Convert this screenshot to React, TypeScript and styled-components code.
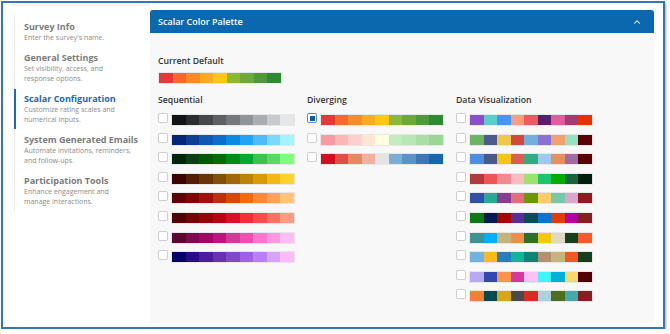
import styled, { createGlobalStyle } from 'styled-components';
import { ChevronUp } from 'lucide-react';

const GlobalStyle = createGlobalStyle`
  html, body {
    margin: 0;
    padding: 0;
    background: #ffffff;
  }
  body {
    font-family: 'Open Sans', 'DejaVu Sans', sans-serif;
  }
`;

const Frame = styled.div`
  box-sizing: border-box;
  width: 664px;
  height: 328px;
  margin: 1px 0 0 1px;
  border: 2px solid #3577b6;
  box-shadow: 1px 2px 2px rgba(0, 0, 0, 0.35);
  background: #ffffff;
  display: flex;
  padding: 0 9px 4px 11px;
`;

const Sidebar = styled.aside`
  width: 136px;
  flex-shrink: 0;
  display: flex;
  flex-direction: column;
`;

const TopStrip = styled.div`
  height: 3px;
  margin-left: -2px;
  background: #f3f3f3;
`;

const Nav = styled.ul`
  margin: 9px 0 0;
  padding: 2px 0 0;
  list-style: none;
  border-left: 1px solid #ebebeb;
  display: flex;
  flex-direction: column;
  gap: 1px;
`;

const NavItem = styled.li<{ $active?: boolean }>`
  margin-left: -1px;
  padding: 4px 0 4px 8px;
  border-left: 2px solid ${(p) => (p.$active ? '#1b6ab3' : 'transparent')};
`;

const NavTitle = styled.div<{ $active?: boolean }>`
  font-size: 9px;
  line-height: 12px;
  font-weight: 700;
  color: ${(p) => (p.$active ? '#1b6ab3' : '#7b7b7b')};
  white-space: nowrap;
`;

const NavDesc = styled.div`
  font-size: 7px;
  line-height: 10px;
  color: #8c8c8c;
  white-space: pre-line;
`;

const Main = styled.section`
  flex: 1;
  margin-top: 7px;
  display: flex;
  flex-direction: column;
`;

const Header = styled.div`
  height: 23px;
  background: #0b67ae;
  border-radius: 3px 3px 0 0;
  display: flex;
  align-items: center;
  justify-content: space-between;
  padding: 0 12px 0 8px;
  color: #ffffff;
`;

const HeaderTitle = styled.span`
  font-size: 9px;
  font-weight: 600;
`;

const Body = styled.div`
  flex: 1;
  background: #f8f8f8;
  padding: 22px 8px 0;
`;

const Label = styled.div`
  font-size: 8.7px;
  line-height: 12px;
  font-weight: 600;
  color: #333333;
`;

const Palette = styled.div`
  display: flex;
  height: 12px;
  box-sizing: border-box;
  border: 1px solid #e6e6e6;
  flex-shrink: 0;
`;

const Swatch = styled.div<{ $color: string }>`
  width: 13.5px;
  height: 100%;
  background: ${(p) => p.$color};
`;

const DefaultPalette = styled(Palette)`
  margin-top: 5px;
  width: fit-content;
`;

const Columns = styled.div`
  display: grid;
  grid-template-columns: 149px 149px 149px;
  margin-top: 10px;
`;

const Column = styled.div`
  display: flex;
  flex-direction: column;
`;

const Rows = styled.div`
  display: flex;
  flex-direction: column;
  gap: 6.6px;
  margin-top: 7px;
`;

const Row = styled.div`
  display: flex;
  align-items: flex-start;
  gap: 3px;
  & > ${Palette} {
    margin-top: 1px;
  }
`;

const Checkbox = styled.span<{ $checked?: boolean }>`
  box-sizing: border-box;
  width: 10px;
  height: 10px;
  border-radius: 2px;
  background: #ffffff;
  border: 1px solid ${(p) => (p.$checked ? '#5b8fc9' : '#cfcfcf')};
  box-shadow: 0 0 1px rgba(0, 0, 0, 0.08);
  padding: 1.5px;
  flex-shrink: 0;
  &::after {
    content: '';
    display: ${(p) => (p.$checked ? 'block' : 'none')};
    width: 100%;
    height: 100%;
    background: #0b5fab;
  }
`;

const defaultColors = ['#e53935', '#f4692e', '#f68b2c', '#fbab22', '#fdc80f', '#8bb83a', '#6fa83a', '#4e9a3a', '#2e8b33'];

const sequential = [
  ['#111417', '#2b2d30', '#45474b', '#5d6064', '#76797d', '#909397', '#aaadb1', '#c8cacd', '#e4e6e9'],
  ['#06267a', '#0d3f94', '#0c58b3', '#0a6fcc', '#0a8be3', '#1ea5f8', '#4cbcfc', '#7bd8ff', '#a2f4ff'],
  ['#04260d', '#0e3f14', '#005a00', '#006f00', '#008e12', '#05aa2d', '#3ec248', '#5ed95f', '#7dff7a'],
  ['#3e0303', '#561f02', '#6b3503', '#844f08', '#a06808', '#bb8409', '#d89c06', '#f4b71a', '#ffd12c'],
  ['#5c0202', '#7d0505', '#9e120a', '#b9320a', '#d44a05', '#ef6b12', '#fc8a3a', '#fda35c', '#ffc47a'],
  ['#520000', '#780307', '#9a0307', '#bb0312', '#d4102a', '#ee2f34', '#fa4a4a', '#fe7066', '#ff9a82'],
  ['#5e0533', '#7c0a4f', '#9c0a63', '#bc1480', '#cb3d98', '#eb4fb1', '#f878cc', '#fd98e3', '#ffbcf5'],
  ['#06036a', '#2b0a8b', '#4b1ca3', '#6630b7', '#7f48cd', '#9f61e5', '#bd7ef2', '#d7a3f8', '#fbbcf9'],
];

const diverging = [
  defaultColors,
  ['#f99ba1', '#fbb6b8', '#fdd0cf', '#fde6d4', '#fffee0', '#c4ebc1', '#b9e6b5', '#a9dfa4', '#9bd794'],
  ['#d1101e', '#dd5048', '#e98665', '#f0b29e', '#e4e4e4', '#7badd9', '#5c92cb', '#3a78b9', '#1667b0'],
];

const dataViz = [
  ['#8a4fc8', '#5dcdca', '#4694ff', '#ff9c80', '#eb5a5f', '#5c1d6f', '#e25da0', '#a63a73', '#e63200'],
  ['#6cb463', '#4c5a8e', '#edc84a', '#d2483c', '#70b0de', '#8a6fd4', '#f1a36f', '#9cdfc0', '#5a0000'],
  ['#4a8fe0', '#4a5a8d', '#f3c618', '#e25b52', '#2fae84', '#9ecaf0', '#e98f5d', '#a16aa5', '#5c0000'],
  ['#b13a3a', '#ef5556', '#f08a90', '#fbbcc1', '#9be36d', '#1dc46b', '#00ad00', '#186440', '#00200c'],
  ['#3150a6', '#2fa592', '#873d90', '#e36b7a', '#6a960a', '#fdcb6b', '#76c9a8', '#dba7cf', '#8b1c1f'],
  ['#0b7a16', '#001b52', '#aa0000', '#5a2e93', '#084c55', '#0275d4', '#e53a00', '#b400a5', '#8b1c1f'],
  ['#3f9192', '#00aefc', '#c5b47a', '#f08e4a', '#2e6e2e', '#f2c813', '#ddd9c4', '#1a3e1b', '#f25c2a'],
  ['#72b2e0', '#fbb91e', '#2a7cbf', '#10b496', '#0f8573', '#b48f70', '#c6b37d', '#f35629', '#183f1c'],
  ['#b8a9f5', '#3248b0', '#ff944a', '#d3399a', '#ffc0f5', '#3ef6fa', '#00b0d8', '#ffd56d', '#530000'],
  ['#f57f34', '#014a4d', '#d5a716', '#4a4a4e', '#dd2a23', '#abd2dd', '#4e6d1d', '#44aaaa', '#8b1c1f'],
];

const navItems = [
  { title: 'Survey Info', desc: "Enter the survey's name." },
  { title: 'General Settings', desc: 'Set visibility, access, and\nresponse options.' },
  { title: 'Scalar Configuration', desc: 'Customize rating scales and\nnumerical inputs.', active: true },
  { title: 'System Generated Emails', desc: 'Automate invitations, reminders,\nand follow-ups.' },
  { title: 'Participation Tools', desc: 'Enhance engagement and\nmanage interactions.' },
];

function Swatches({ colors }: { colors: string[] }) {
  return (
    <>
      {colors.map((c, i) => (
        <Swatch key={i} $color={c} />
      ))}
    </>
  );
}

function PaletteGroup({ title, palettes, checked }: { title: string; palettes: string[][]; checked?: number }) {
  return (
    <Column>
      <Label>{title}</Label>
      <Rows>
        {palettes.map((colors, i) => (
          <Row key={i}>
            <Checkbox $checked={checked === i} />
            <Palette>
              <Swatches colors={colors} />
            </Palette>
          </Row>
        ))}
      </Rows>
    </Column>
  );
}

export default function App() {
  return (
    <>
      <GlobalStyle />
      <Frame>
        <Sidebar>
          <TopStrip />
          <Nav>
            {navItems.map((item) => (
              <NavItem key={item.title} $active={item.active}>
                <NavTitle $active={item.active}>{item.title}</NavTitle>
                <NavDesc>{item.desc}</NavDesc>
              </NavItem>
            ))}
          </Nav>
        </Sidebar>
        <Main>
          <Header>
            <HeaderTitle>Scalar Color Palette</HeaderTitle>
            <ChevronUp size={10} strokeWidth={2.5} />
          </Header>
          <Body>
            <Label>Current Default</Label>
            <DefaultPalette>
              <Swatches colors={defaultColors} />
            </DefaultPalette>
            <Columns>
              <PaletteGroup title="Sequential" palettes={sequential} />
              <PaletteGroup title="Diverging" palettes={diverging} checked={0} />
              <PaletteGroup title="Data Visualization" palettes={dataViz} />
            </Columns>
          </Body>
        </Main>
      </Frame>
    </>
  );
}
